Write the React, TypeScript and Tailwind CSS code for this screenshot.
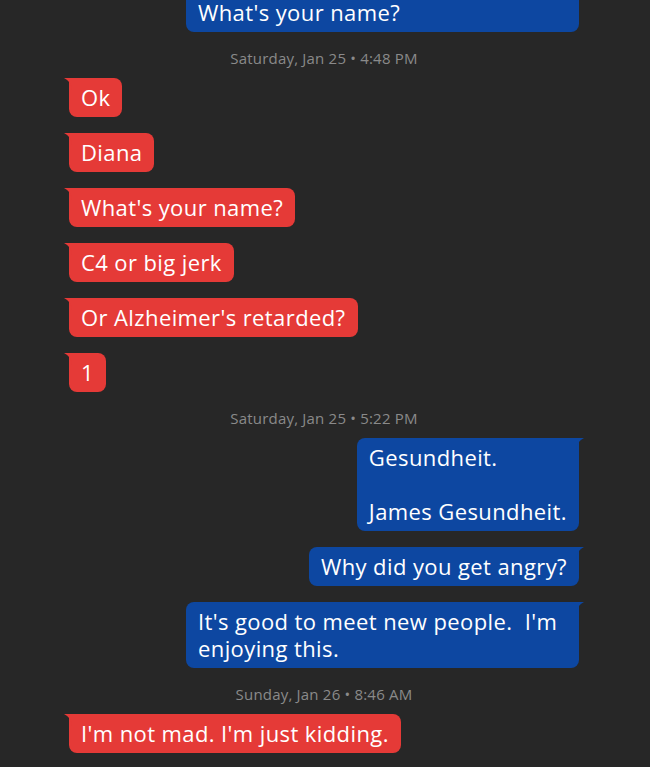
import type { ReactNode } from "react";

type Msg =
    | { kind: "time"; text: string }
    | { kind: "in" | "out"; text: string; wide?: boolean };

const messages: Msg[] = [
    { kind: "out", text: "What's your name?", wide: true },
    { kind: "time", text: "Saturday, Jan 25 • 4:48 PM" },
    { kind: "in", text: "Ok" },
    { kind: "in", text: "Diana" },
    { kind: "in", text: "What's your name?" },
    { kind: "in", text: "C4 or big jerk" },
    { kind: "in", text: "Or Alzheimer's retarded?" },
    { kind: "in", text: "1" },
    { kind: "time", text: "Saturday, Jan 25 • 5:22 PM" },
    { kind: "out", text: "Gesundheit.\n\nJames Gesundheit." },
    { kind: "out", text: "Why did you get angry?" },
    { kind: "out", text: "It's good to meet new people.  I'm enjoying this." },
    { kind: "time", text: "Sunday, Jan 26 • 8:46 AM" },
    { kind: "in", text: "I'm not mad. I'm just kidding." },
];

const Tail = ({ side, color }: { side: "left" | "right"; color: string }) => (
    <svg
        width="8"
        height="12"
        viewBox="0 0 8 12"
        className={side === "left" ? "absolute -left-[5px] top-0" : "absolute -right-[5px] top-0 -scale-x-100"}
    >
        <path d="M0 0 H8 V12 Q7 3 0 0 Z" fill={color} />
    </svg>
);

const Bubble = ({ kind, wide, children }: { kind: "in" | "out"; wide?: boolean; children: ReactNode }) => {
    const isIn = kind === "in";
    return (
        <div className={isIn ? "flex justify-start" : "flex justify-end"}>
            <div
                className={
                    "relative max-w-[393px] px-3 py-[6px] text-[22px] leading-[27px] tracking-[0.4px] text-white whitespace-pre-wrap " +
                    (wide ? "w-[393px] " : "") +
                    (isIn ? "bg-[#e53a37] rounded-[8px] rounded-tl-none" : "bg-[#0d47a1] rounded-[8px] rounded-tr-none")
                }
            >
                <Tail side={isIn ? "left" : "right"} color={isIn ? "#e53a37" : "#0d47a1"} />
                {children}
            </div>
        </div>
    );
};

export default function App() {
    return (
        <div
            className="h-[767px] w-[650px] overflow-hidden bg-[#272727]"
            style={{ fontFamily: "'Open Sans', 'Noto Sans', sans-serif" }}
        >
            <div className="-mt-[7px] flex flex-col gap-4 pl-[69px] pr-[71px]">
                {messages.map((m, i) =>
                    m.kind === "time" ? (
                        <div key={i} className="-mb-[6px] text-center text-[15px] leading-5 tracking-[0.2px] text-[#8a8a8a]">
                            {m.text}
                        </div>
                    ) : (
                        <Bubble key={i} kind={m.kind} wide={m.wide}>
                            {m.text}
                        </Bubble>
                    )
                )}
            </div>
        </div>
    );
}
